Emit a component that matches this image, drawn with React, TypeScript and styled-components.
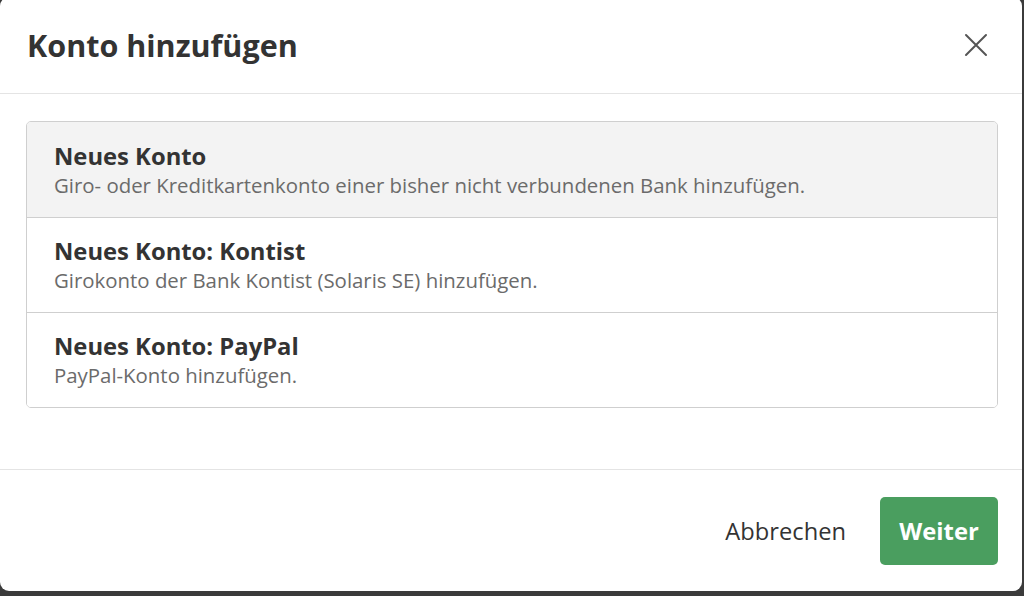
import React from "react";
import styled, { createGlobalStyle } from "styled-components";

const Global = createGlobalStyle`
  html, body { margin: 0; padding: 0; }
  body {
    background: #3b3b3b;
    font-family: "Open Sans", "Noto Sans", sans-serif;
    overflow: hidden;
    width: 1024px;
    height: 596px;
  }
`;

const Dialog = styled.div`
  width: 1022px;
  height: 594px;
  margin-top: -3px;
  background: #ffffff;
  border-radius: 9px;
  display: flex;
  flex-direction: column;
  box-sizing: border-box;
`;

const Header = styled.div`
  height: 97px;
  box-sizing: border-box;
  border-bottom: 1px solid #e4e4e4;
  display: flex;
  align-items: center;
  justify-content: space-between;
  padding: 0 34px 0 27px;
`;

const Title = styled.h1`
  margin: 0;
  font-size: 30.5px;
  font-weight: 700;
  color: #333333;
  letter-spacing: 0;
`;

const CloseButton = styled.button`
  border: none;
  background: none;
  padding: 0;
  width: 24px;
  height: 24px;
  display: flex;
  align-items: center;
  justify-content: center;
  cursor: pointer;
`;

const Body = styled.div`
  flex: 1;
  padding: 27px 24px 0 26px;
  border-bottom: 1px solid #e4e4e4;
`;

const List = styled.div`
  border: 1px solid #cfcfcf;
  border-radius: 5px;
  overflow: hidden;
`;

const Item = styled.div<{ $selected?: boolean }>`
  height: 95px;
  box-sizing: border-box;
  padding: 0 27px;
  display: flex;
  flex-direction: column;
  justify-content: center;
  background: ${(p) => (p.$selected ? "#f3f3f3" : "#ffffff")};
  & + & {
    border-top: 1px solid #cfcfcf;
  }
`;

const ItemTitle = styled.div`
  font-size: 23.8px;
  font-weight: 700;
  color: #333333;
  line-height: 30px;
`;

const ItemDesc = styled.div`
  font-size: 20.4px;
  color: #6b6b6b;
  line-height: 28px;
`;

const Footer = styled.div`
  height: 121px;
  box-sizing: border-box;
  display: flex;
  align-items: center;
  justify-content: flex-end;
  gap: 34px;
  padding: 0 24px 0 26px;
`;

const CancelButton = styled.button`
  border: none;
  background: none;
  font-family: inherit;
  font-size: 23.7px;
  color: #333333;
  padding: 0;
  cursor: pointer;
`;

const PrimaryButton = styled.button`
  border: none;
  background: #4a9e5f;
  color: #ffffff;
  font-family: inherit;
  font-weight: 700;
  font-size: 23.8px;
  width: 118px;
  height: 68px;
  border-radius: 5px;
  cursor: pointer;
`;

const items = [
  {
    title: "Neues Konto",
    desc: "Giro- oder Kreditkartenkonto einer bisher nicht verbundenen Bank hinzufügen.",
    selected: true,
  },
  {
    title: "Neues Konto: Kontist",
    desc: "Girokonto der Bank Kontist (Solaris SE) hinzufügen.",
  },
  {
    title: "Neues Konto: PayPal",
    desc: "PayPal-Konto hinzufügen.",
  },
];

export default function App() {
  return (
    <>
      <Global />
      <Dialog>
        <Header>
          <Title>Konto hinzufügen</Title>
          <CloseButton aria-label="Schließen">
            <svg width="24" height="24" viewBox="0 0 24 24">
              <path d="M2 2 L22 22 M22 2 L2 22" stroke="#555" strokeWidth="2" strokeLinecap="round" />
            </svg>
          </CloseButton>
        </Header>
        <Body>
          <List>
            {items.map((it) => (
              <Item key={it.title} $selected={it.selected}>
                <ItemTitle>{it.title}</ItemTitle>
                <ItemDesc>{it.desc}</ItemDesc>
              </Item>
            ))}
          </List>
        </Body>
        <Footer>
          <CancelButton>Abbrechen</CancelButton>
          <PrimaryButton>Weiter</PrimaryButton>
        </Footer>
      </Dialog>
    </>
  );
}
